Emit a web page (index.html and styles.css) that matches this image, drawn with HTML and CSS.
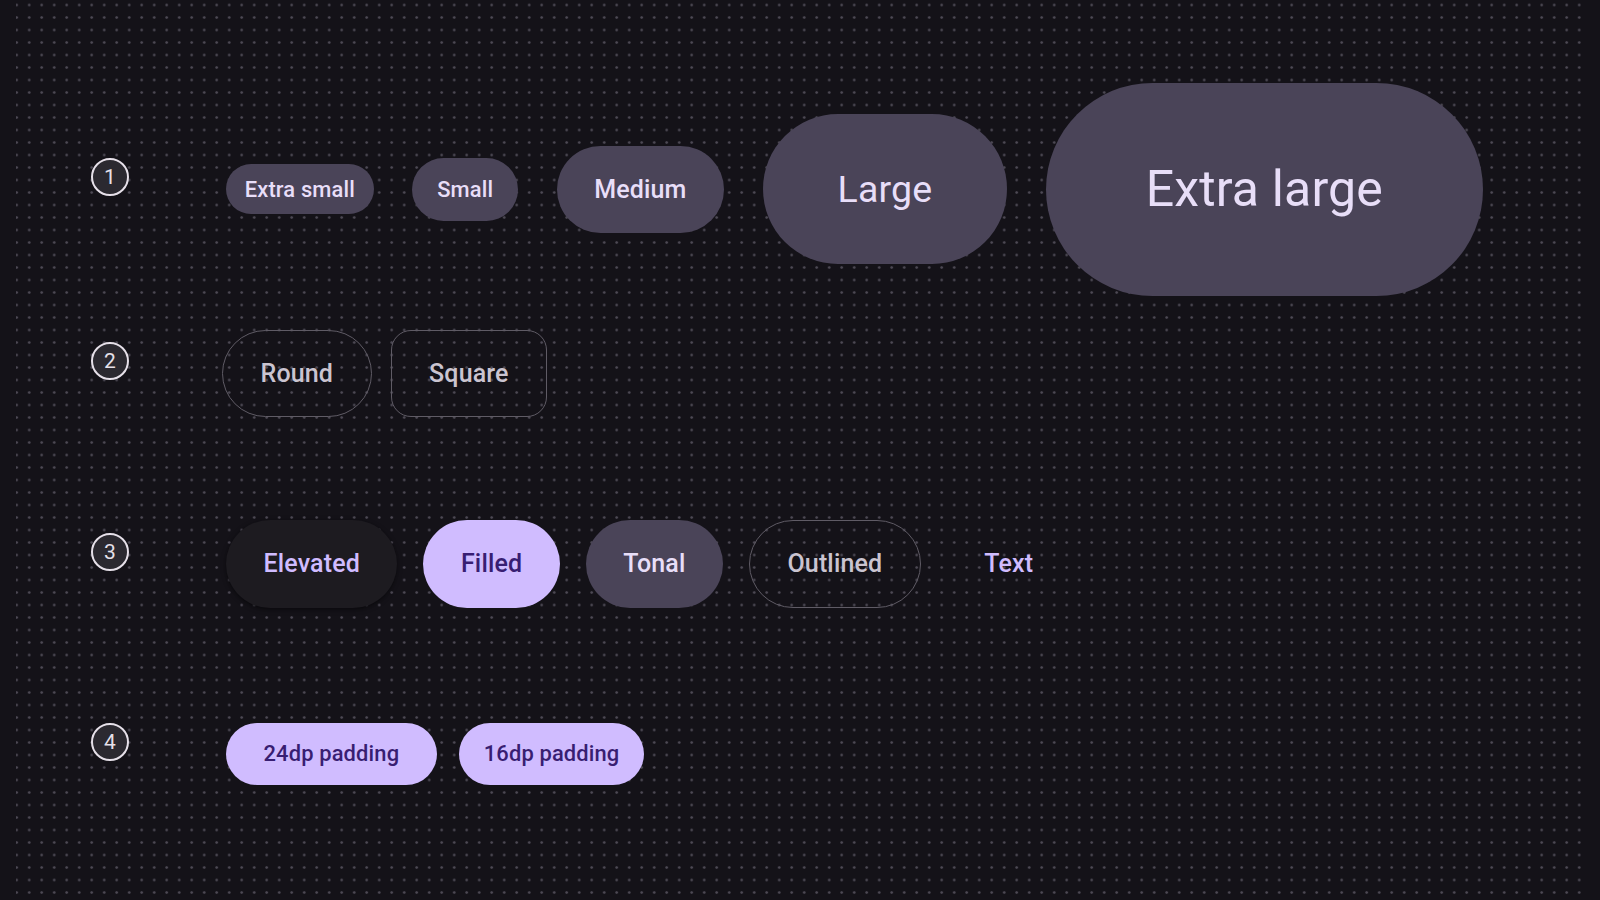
FILE: index.html
```html
<!DOCTYPE html>
<html lang="en">
<head>
    <meta charset="UTF-8">
    <meta name="viewport" content="width=device-width, initial-scale=1.0">
    <title>Button variants</title>
    <link rel="stylesheet" href="styles.css">
</head>
<body>
    <div class="sheet">
        <!-- 1: sizes -->
        <div class="row row-sizes">
            <div class="marker">1</div>
            <div class="buttons">
                <button class="btn tonal xs">Extra small</button>
                <button class="btn tonal sm">Small</button>
                <button class="btn tonal md">Medium</button>
                <button class="btn tonal lg">Large</button>
                <button class="btn tonal xl">Extra large</button>
            </div>
        </div>

        <!-- 2: shapes -->
        <div class="row row-shapes">
            <div class="marker">2</div>
            <div class="buttons">
                <button class="btn outlined md">Round</button>
                <button class="btn outlined md square">Square</button>
            </div>
        </div>

        <!-- 3: styles -->
        <div class="row row-styles">
            <div class="marker">3</div>
            <div class="buttons">
                <button class="btn elevated md">Elevated</button>
                <button class="btn filled md">Filled</button>
                <button class="btn tonal md">Tonal</button>
                <button class="btn outlined md">Outlined</button>
                <button class="btn text md">Text</button>
            </div>
        </div>

        <!-- 4: padding -->
        <div class="row row-padding">
            <div class="marker">4</div>
            <div class="buttons">
                <button class="btn filled sm pad-24">24dp padding</button>
                <button class="btn filled sm pad-16">16dp padding</button>
            </div>
        </div>
    </div>
</body>
</html>
```

FILE: styles.css
```css
html {
    background: #141218;
}

body {
    margin: 0 16px;
    min-height: 100vh;
    font-family: Roboto, 'Noto Sans', sans-serif;
    background-image: radial-gradient(circle, #4d4954 0.9px, transparent 1.6px);
    background-size: 12.5px 12.5px;
    background-position: -5.55px -1.25px;
}

.sheet {
    padding: 83px 0 0 75px;
}

.row {
    display: flex;
    align-items: center;
}

.row-shapes {
    margin-top: 34px;
}

.row-styles {
    margin-top: 103px;
}

.row-padding {
    margin-top: 115px;
}

.marker {
    width: 34px;
    height: 34px;
    border: 2px solid #e6e0e9;
    border-radius: 50%;
    background: #2b2930;
    color: #e6e0e9;
    font-size: 21px;
    display: flex;
    align-items: center;
    justify-content: center;
    margin-bottom: 24px;
    flex-shrink: 0;
}

.buttons {
    display: flex;
    align-items: center;
    margin-left: 97px;
}

.row-sizes .buttons {
    gap: 38.5px;
}

.row-shapes .buttons {
    gap: 19px;
    margin-left: 93px;
}

.row-styles .buttons {
    gap: 26px;
}

.row-padding .buttons {
    gap: 22px;
}

.btn {
    font-family: inherit;
    border: none;
    border-radius: 999px;
    cursor: pointer;
    white-space: nowrap;
    display: flex;
    align-items: center;
    justify-content: center;
    box-sizing: border-box;
    letter-spacing: 0.15px;
}

/* sizes */
.xs {
    height: 50px;
    padding: 0 18.75px;
    font-size: 21.9px;
    font-weight: 500;
}

.sm {
    height: 62.5px;
    padding: 0 25px;
    font-size: 21.9px;
    font-weight: 500;
}

.md {
    height: 87.5px;
    padding: 0 37.5px;
    font-size: 25px;
    font-weight: 500;
}

.lg {
    height: 150px;
    padding: 0 75px;
    font-size: 37.5px;
    font-weight: 400;
}

.xl {
    height: 212.5px;
    padding: 0 100px;
    font-size: 50px;
    font-weight: 400;
}

.pad-24 {
    padding: 0 37.5px;
}

.pad-16 {
    padding: 0 25px;
}

/* colour styles */
.tonal {
    background: #4a4458;
    color: #e8def8;
}

.filled {
    background: #d0bcff;
    color: #381e72;
}

.elevated {
    background: #1d1b20;
    color: #d0bcff;
    box-shadow: 0 1.5px 3px rgba(0, 0, 0, 0.3), 0 1.5px 5px 1.5px rgba(0, 0, 0, 0.15);
}

.outlined {
    background: transparent;
    color: #cac4d0;
    border: 1.5px solid #5f5b65;
}

.outlined.square {
    border-radius: 20px;
}

.text {
    background: transparent;
    color: #d0bcff;
}
```
